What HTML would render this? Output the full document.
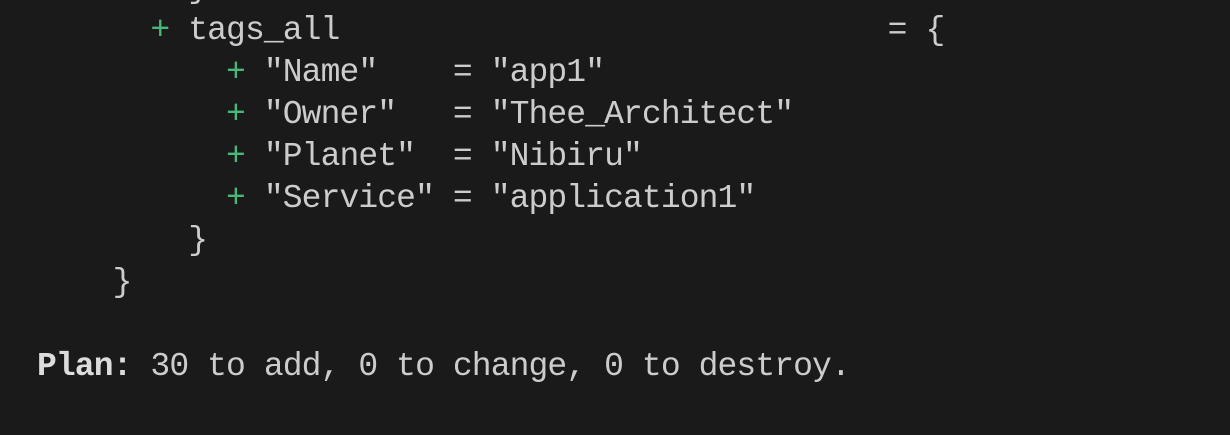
<!DOCTYPE html>
<html><head><style>
html,body{margin:0;padding:0;background:#1a1a1a;width:1230px;height:435px;overflow:hidden}
pre{position:absolute;left:37px;top:-32px;margin:0;font-family:"Liberation Mono",monospace;font-size:33px;letter-spacing:-0.9px;line-height:42px;color:#cccccc;white-space:pre}
.g{color:#48b77a}
b{color:#dcdcdc}
</style></head><body>
<pre>        }
      <span class="g">+</span> tags_all                             = {
          <span class="g">+</span> "Name"    = "app1"
          <span class="g">+</span> "Owner"   = "Thee_Architect"
          <span class="g">+</span> "Planet"  = "Nibiru"
          <span class="g">+</span> "Service" = "application1"
        }
    }

<b>Plan:</b> 30 to add, 0 to change, 0 to destroy.</pre>
</body></html>
